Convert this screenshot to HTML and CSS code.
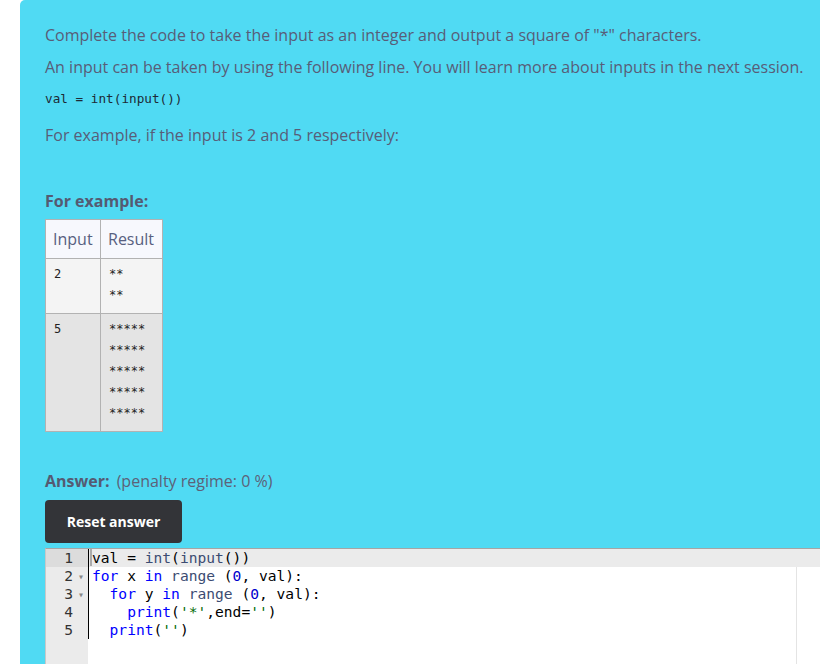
FILE: index.html
```html
<!DOCTYPE html>
<html>
<head>
<meta charset="utf-8">
<link rel="stylesheet" href="styles.css">
</head>
<body>
<div class="question">
  <div class="qtext">
    <p>Complete the code to take the input as an integer and output a square of "*" characters.</p>
    <p>An input can be taken by using the following line. You will learn more about inputs in the next session.</p>
    <pre class="snippet">val = int(input())</pre>
    <p>For example, if the input is 2 and 5 respectively:</p>
  </div>

  <h4 class="examples-title">For example:</h4>
  <table class="examples">
    <thead>
      <tr><th class="c-in">Input</th><th class="c-res">Result</th></tr>
    </thead>
    <tbody>
      <tr class="r0"><td><pre>2</pre></td><td><pre>**
**</pre></td></tr>
      <tr class="r1"><td><pre>5</pre></td><td><pre>*****
*****
*****
*****
*****</pre></td></tr>
    </tbody>
  </table>

  <div class="answer-head"><span class="answer-label">Answer:</span> (penalty regime: 0 %)</div>
  <button class="reset">Reset answer</button>

  <div class="editor">
    <div class="gutter">
      <div class="gline active"><span class="num">1</span><span class="fold"></span></div>
      <div class="gline"><span class="num">2</span><span class="fold">▾</span></div>
      <div class="gline"><span class="num">3</span><span class="fold">▾</span></div>
      <div class="gline"><span class="num">4</span><span class="fold"></span></div>
      <div class="gline"><span class="num">5</span><span class="fold"></span></div>
    </div>
    <div class="code">
      <div class="cline active"><span class="cursor"></span>val = <span class="fn">int</span>(<span class="fn">input</span>())</div>
      <div class="cline"><span class="kw">for</span> x <span class="kw">in</span> <span class="fn">range</span> (<span class="num-c">0</span>, val):</div>
      <div class="cline">  <span class="kw">for</span> y <span class="kw">in</span> <span class="fn">range</span> (<span class="num-c">0</span>, val):</div>
      <div class="cline">    <span class="kw">print</span>(<span class="str">'*'</span>,end=<span class="str">''</span>)</div>
      <div class="cline">  <span class="kw">print</span>(<span class="str">''</span>)</div>
    </div>
  </div>
</div>
</body>
</html>
```

FILE: styles.css
```css
html, body {
  margin: 0;
  padding: 0;
  background: #ffffff;
  overflow: hidden;
  height: 664px;
}

.question {
  margin-left: 20px;
  background: #50daf3;
  border-top-left-radius: 5px;
  padding: 24px 0 0 25px;
  height: 800px;
  font-family: "Open Sans", "DejaVu Sans", sans-serif;
  font-size: 16px;
  color: #585d78;
}

.qtext p {
  margin: 0 0 10px;
  line-height: 22px;
}

.snippet {
  margin: 0 0 16px;
  padding-top: 2px;
  font-family: "DejaVu Sans Mono", monospace;
  font-size: 12.7px;
  line-height: 18px;
  color: #1e2a36;
}

.examples-title {
  margin: 44px 0 7px;
  font-size: 16px;
  font-weight: 700;
  line-height: 22px;
  color: #555a72;
}

.examples {
  border-collapse: collapse;
  border: 1px solid #b2b2b2;
}

.examples th {
  background: #f7f8fd;
  font-weight: 400;
  font-size: 16px;
  text-align: left;
  padding: 0 6px 0 7px;
  height: 38px;
  border: 1px solid #b2b2b2;
  color: #586080;
}

.examples td {
  border: 1px solid #b2b2b2;
  vertical-align: top;
  padding: 5px 7px 7px 8px;
}

.examples .c-in { width: 41px; }
.examples .c-res { width: 48px; }

.examples pre {
  margin: 0;
  font-family: "DejaVu Sans Mono", monospace;
  font-size: 12px;
  line-height: 21px;
  color: #222;
}

.r0 td { background: #f4f4f4; }
.r1 td { background: #e4e4e4; }

.answer-head {
  margin-top: 38px;
  line-height: 22px;
  color: #5d6178;
}

.answer-label {
  font-weight: 700;
  color: #555a72;
  margin-right: 3px;
}

.reset {
  display: block;
  margin-top: 8px;
  width: 137px;
  height: 43px;
  border: none;
  border-radius: 4px;
  background: #333438;
  color: #ffffff;
  font-family: "Open Sans", "DejaVu Sans", sans-serif;
  font-size: 14px;
  font-weight: 700;
  padding: 0;
}

.editor {
  margin-top: 5px;
  position: relative;
  display: flex;
  height: 140px;
  width: 800px;
  background: #ffffff;
  border-top: 1px solid #a5a5a5;
  border-left: 1px solid #c8c8c8;
  font-family: "DejaVu Sans Mono", monospace;
  font-size: 14.6px;
}

.editor::after {
  content: "";
  position: absolute;
  left: 750px;
  top: 0;
  bottom: 0;
  width: 1px;
  background: #e4e4e4;
}

.gutter {
  width: 42px;
  background: #ebebeb;
  color: #333;
  flex: none;
}

.gline {
  height: 18px;
  line-height: 18px;
  display: flex;
  justify-content: flex-end;
  padding-right: 4px;
}

.gline.active { background: #dcdcdc; }

.gline .num {
  text-align: right;
  margin-right: 1px;
}

.gline .fold {
  width: 10px;
  font-size: 10px;
  color: #888;
  text-align: right;
  padding-top: 1px;
}

.code {
  flex: 1;
  align-self: flex-start;
  border-left: 1px solid #000;
  position: relative;
  z-index: 1;
}

.cline {
  height: 18px;
  line-height: 18px;
  padding-left: 3px;
  white-space: pre;
  color: #000;
}

.cline.active { background: #ebebeb; }

.cursor {
  display: inline-block;
  width: 0;
  height: 17px;
  border-left: 2px solid #aaaaaa;
  margin-left: -2px;
  vertical-align: top;
}

.kw { color: #0000ff; }
.fn { color: #3c4c72; }
.num-c { color: #0000cd; }
.str { color: #036a07; }
```
